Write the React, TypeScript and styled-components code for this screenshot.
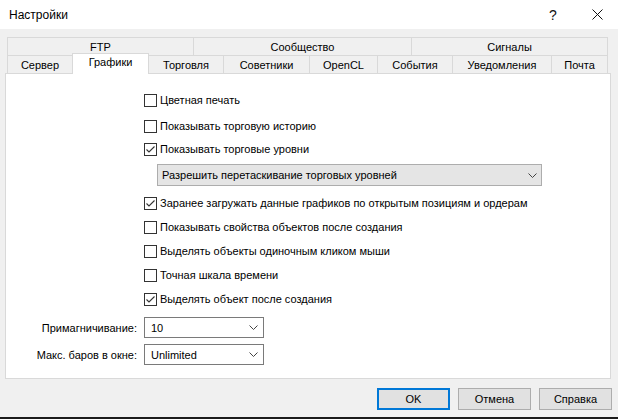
import styled, { createGlobalStyle } from "styled-components";

const GlobalStyle = createGlobalStyle`
  html, body {
    margin: 0;
    padding: 0;
  }
  body {
    background: #f0f0f0;
    font-family: "Liberation Sans", Arial, sans-serif;
    font-size: 11px;
    color: #000;
  }
`;

const Window = styled.div`
  width: 618px;
  height: 419px;
  background: #f0f0f0;
  display: flex;
  flex-direction: column;
  overflow: hidden;
`;

const TitleBar = styled.div`
  height: 29px;
  background: #fff;
  display: flex;
  align-items: center;
  padding-left: 9px;
  box-sizing: border-box;
`;

const Title = styled.span`
  flex: 1;
  font-size: 12px;
`;

const TitleButton = styled.div<{ $w: number }>`
  width: ${(p) => p.$w}px;
  height: 29px;
  display: flex;
  align-items: center;
  justify-content: center;
  font-size: 14px;
  color: #111;
`;

const Tabs = styled.div`
  margin: 8px 0 0 7px;
  display: flex;
  flex-direction: column;
  position: relative;
  z-index: 1;
`;

const TabRow = styled.div`
  display: flex;
  height: 18px;
  align-items: flex-end;
`;

const Tab = styled.div<{ $w: number; $active?: boolean }>`
  box-sizing: border-box;
  width: ${(p) => p.$w}px;
  height: ${(p) => (p.$active ? 21 : 18)}px;
  margin-bottom: ${(p) => (p.$active ? -1 : 0)}px;
  margin-right: ${(p) => (p.$active ? -1 : 0)}px;
  border: 1px solid #d9d9d9;
  border-bottom: none;
  border-right: ${(p) => (p.$active ? "1px solid #d9d9d9" : "none")};
  background: ${(p) => (p.$active ? "#fff" : "#f0f0f0")};
  position: relative;
  z-index: ${(p) => (p.$active ? 2 : 0)};
  display: flex;
  align-items: ${(p) => (p.$active ? "flex-start" : "center")};
  padding-top: ${(p) => (p.$active ? 2 : 0)}px;
  justify-content: center;
  font-size: 11px;
  white-space: nowrap;

  &:last-child {
    border-right: 1px solid #d9d9d9;
  }
`;

const Panel = styled.div`
  box-sizing: border-box;
  margin-left: 5px;
  width: 606px;
  height: 306px;
  background: #fff;
  border: 1px solid #d9d9d9;
  display: flex;
  flex-direction: column;
  padding-top: 16px;
`;

const CheckRow = styled.label<{ $mt: number }>`
  display: flex;
  align-items: center;
  height: 20px;
  margin-top: ${(p) => p.$mt}px;
  margin-left: 138px;
  font-size: 11px;
`;

const Box = styled.span`
  box-sizing: border-box;
  width: 13px;
  height: 13px;
  border: 1px solid #333;
  background: #fff;
  margin-right: 3px;
  display: flex;
  align-items: center;
  justify-content: center;
`;

const WideSelect = styled.div`
  box-sizing: border-box;
  margin: 5px 0 0 151px;
  width: 385px;
  height: 22px;
  background: #e5e5e5;
  border: 1px solid #adadad;
  display: flex;
  align-items: center;
  padding: 0 4px 0 4px;
  font-size: 11px;
`;

const SelectText = styled.span`
  flex: 1;
`;

const FieldRow = styled.div<{ $mt: number }>`
  display: grid;
  grid-template-columns: 131px 120px;
  column-gap: 7px;
  align-items: center;
  margin-top: ${(p) => p.$mt}px;
`;

const FieldLabel = styled.span`
  text-align: right;
  font-size: 11px;
`;

const Combo = styled.div`
  box-sizing: border-box;
  height: 21px;
  border: 1px solid #7a7a7a;
  background: #fff;
  display: flex;
  align-items: center;
  padding: 0 5px 0 6px;
  font-size: 11px;
`;

const Footer = styled.div`
  display: flex;
  justify-content: flex-end;
  gap: 8px;
  padding-right: 6px;
  margin-top: 9px;
`;

const Button = styled.button<{ $default?: boolean }>`
  box-sizing: border-box;
  width: 73px;
  height: 22px;
  background: #e1e1e1;
  border: ${(p) => (p.$default ? "2px solid #0078d7" : "1px solid #adadad")};
  font-family: "Liberation Sans", Arial, sans-serif;
  font-size: 11px;
  color: #000;
  padding: 0;
`;

const BottomEdge = styled.div`
  margin-top: auto;
  height: 2px;
  background: #1b1b1b;
`;

function Chevron() {
  return (
    <svg width="9" height="5" viewBox="0 0 9 5">
      <polyline points="0.5,0.5 4.5,4.5 8.5,0.5" fill="none" stroke="#444" strokeWidth="1" />
    </svg>
  );
}

function CloseIcon() {
  return (
    <svg width="11" height="11" viewBox="0 0 11 11">
      <path d="M0.5 0.5 L10.5 10.5 M10.5 0.5 L0.5 10.5" stroke="#111" strokeWidth="1" />
    </svg>
  );
}

function Check({ label, checked, mt }: { label: string; checked?: boolean; mt: number }) {
  return (
    <CheckRow $mt={mt}>
      <Box>
        {checked && (
          <svg width="11" height="11" viewBox="0 0 11 11">
            <polyline points="1.5,5.5 4,8 9.5,2.5" fill="none" stroke="#333" strokeWidth="1.1" />
          </svg>
        )}
      </Box>
      {label}
    </CheckRow>
  );
}

const topTabs = [
  { label: "FTP", w: 186 },
  { label: "Сообщество", w: 218 },
  { label: "Сигналы", w: 197 },
];

const bottomTabs = [
  { label: "Сервер", w: 65 },
  { label: "Графики", w: 77, active: true },
  { label: "Торговля", w: 75 },
  { label: "Советники", w: 86 },
  { label: "OpenCL", w: 68 },
  { label: "События", w: 75 },
  { label: "Уведомления", w: 99 },
  { label: "Почта", w: 57 },
];

export default function App() {
  return (
    <Window>
      <GlobalStyle />
      <TitleBar>
        <Title>Настройки</Title>
        <TitleButton $w={46}>?</TitleButton>
        <TitleButton $w={42}>
          <CloseIcon />
        </TitleButton>
      </TitleBar>

      <Tabs>
        <TabRow>
          {topTabs.map((t) => (
            <Tab key={t.label} $w={t.w}>
              {t.label}
            </Tab>
          ))}
        </TabRow>
        <TabRow>
          {bottomTabs.map((t) => (
            <Tab key={t.label} $w={t.w} $active={t.active}>
              {t.label}
            </Tab>
          ))}
        </TabRow>
      </Tabs>

      <Panel>
        <Check label="Цветная печать" mt={0} />
        <Check label="Показывать торговую историю" mt={6} />
        <Check label="Показывать торговые уровни" checked mt={3} />
        <WideSelect>
          <SelectText>Разрешить перетаскивание торговых уровней</SelectText>
          <Chevron />
        </WideSelect>
        <Check label="Заранее загружать данные графиков по открытым позициям и ордерам" checked mt={7} />
        <Check label="Показывать свойства объектов после создания" mt={4} />
        <Check label="Выделять объекты одиночным кликом мыши" mt={4} />
        <Check label="Точная шкала времени" mt={4} />
        <Check label="Выделять объект после создания" checked mt={4} />
        <FieldRow $mt={8}>
          <FieldLabel>Примагничивание:</FieldLabel>
          <Combo>
            <SelectText>10</SelectText>
            <Chevron />
          </Combo>
        </FieldRow>
        <FieldRow $mt={6}>
          <FieldLabel>Макс. баров в окне:</FieldLabel>
          <Combo>
            <SelectText>Unlimited</SelectText>
            <Chevron />
          </Combo>
        </FieldRow>
      </Panel>

      <Footer>
        <Button $default>OK</Button>
        <Button>Отмена</Button>
        <Button>Справка</Button>
      </Footer>
      <BottomEdge />
    </Window>
  );
}
